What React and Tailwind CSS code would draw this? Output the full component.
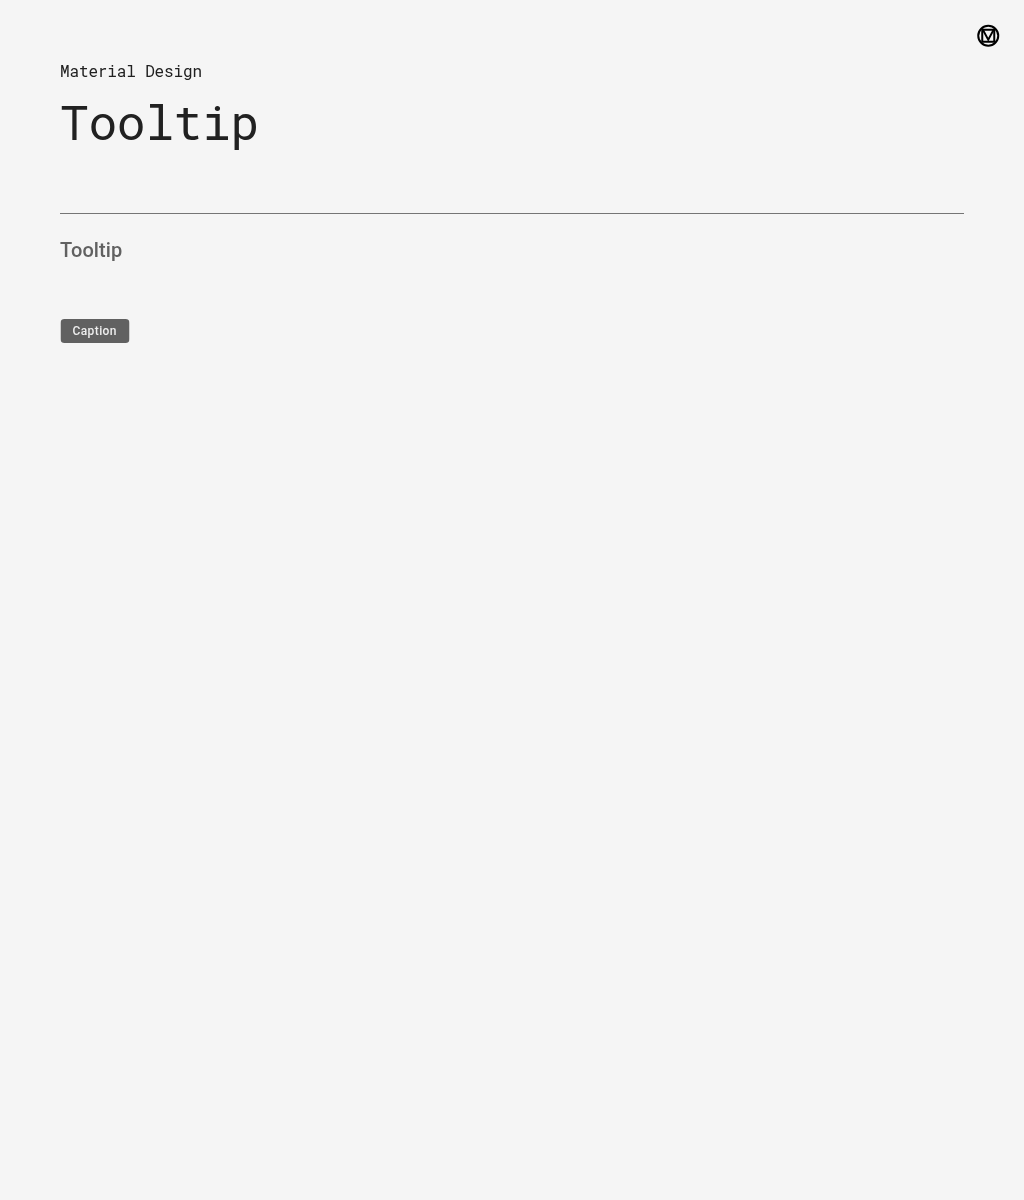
export default function App() {
  return (
    <main className="flex h-[1200px] w-[1024px] flex-col bg-[#f5f5f5] font-['Roboto',sans-serif]">
      <header className="flex items-start justify-between pl-[60px] pr-6 pt-6">
        <div className="pt-[35px] font-['Roboto_Mono','Liberation_Mono',monospace] text-[#212121] will-change-transform">
          <p className="h-6 text-base leading-6 tracking-[-0.14px]">Material Design</p>
          <h1 className="mt-[7px] text-[48px] leading-[64px] tracking-[-0.4px]">Tooltip</h1>
        </div>
        <svg className="h-6 w-6" viewBox="0 0 24 24" fill="none" stroke="#000" strokeWidth="2">
          <circle cx="12.25" cy="11.75" r="10" />
          <path d="M6.25 5.75h12v12h-12z" />
          <path d="m7 6 5.25 9.8L17.5 6" strokeWidth="1.9" />
        </svg>
      </header>
      <section className="mx-[60px] mt-[59px] border-t border-[#757575] pt-6">
        <h2 className="text-xl leading-6 font-medium tracking-[0.1px] text-[#616161] will-change-transform">Tooltip</h2>
        <div className="mt-[57px] flex h-6 w-[69px] translate-x-[0.5px] items-center rounded bg-[#616161] pl-[12px] text-xs font-medium tracking-[0.4px] text-[#eeeeee] will-change-transform">Caption</div>
      </section>
    </main>
  );
}
